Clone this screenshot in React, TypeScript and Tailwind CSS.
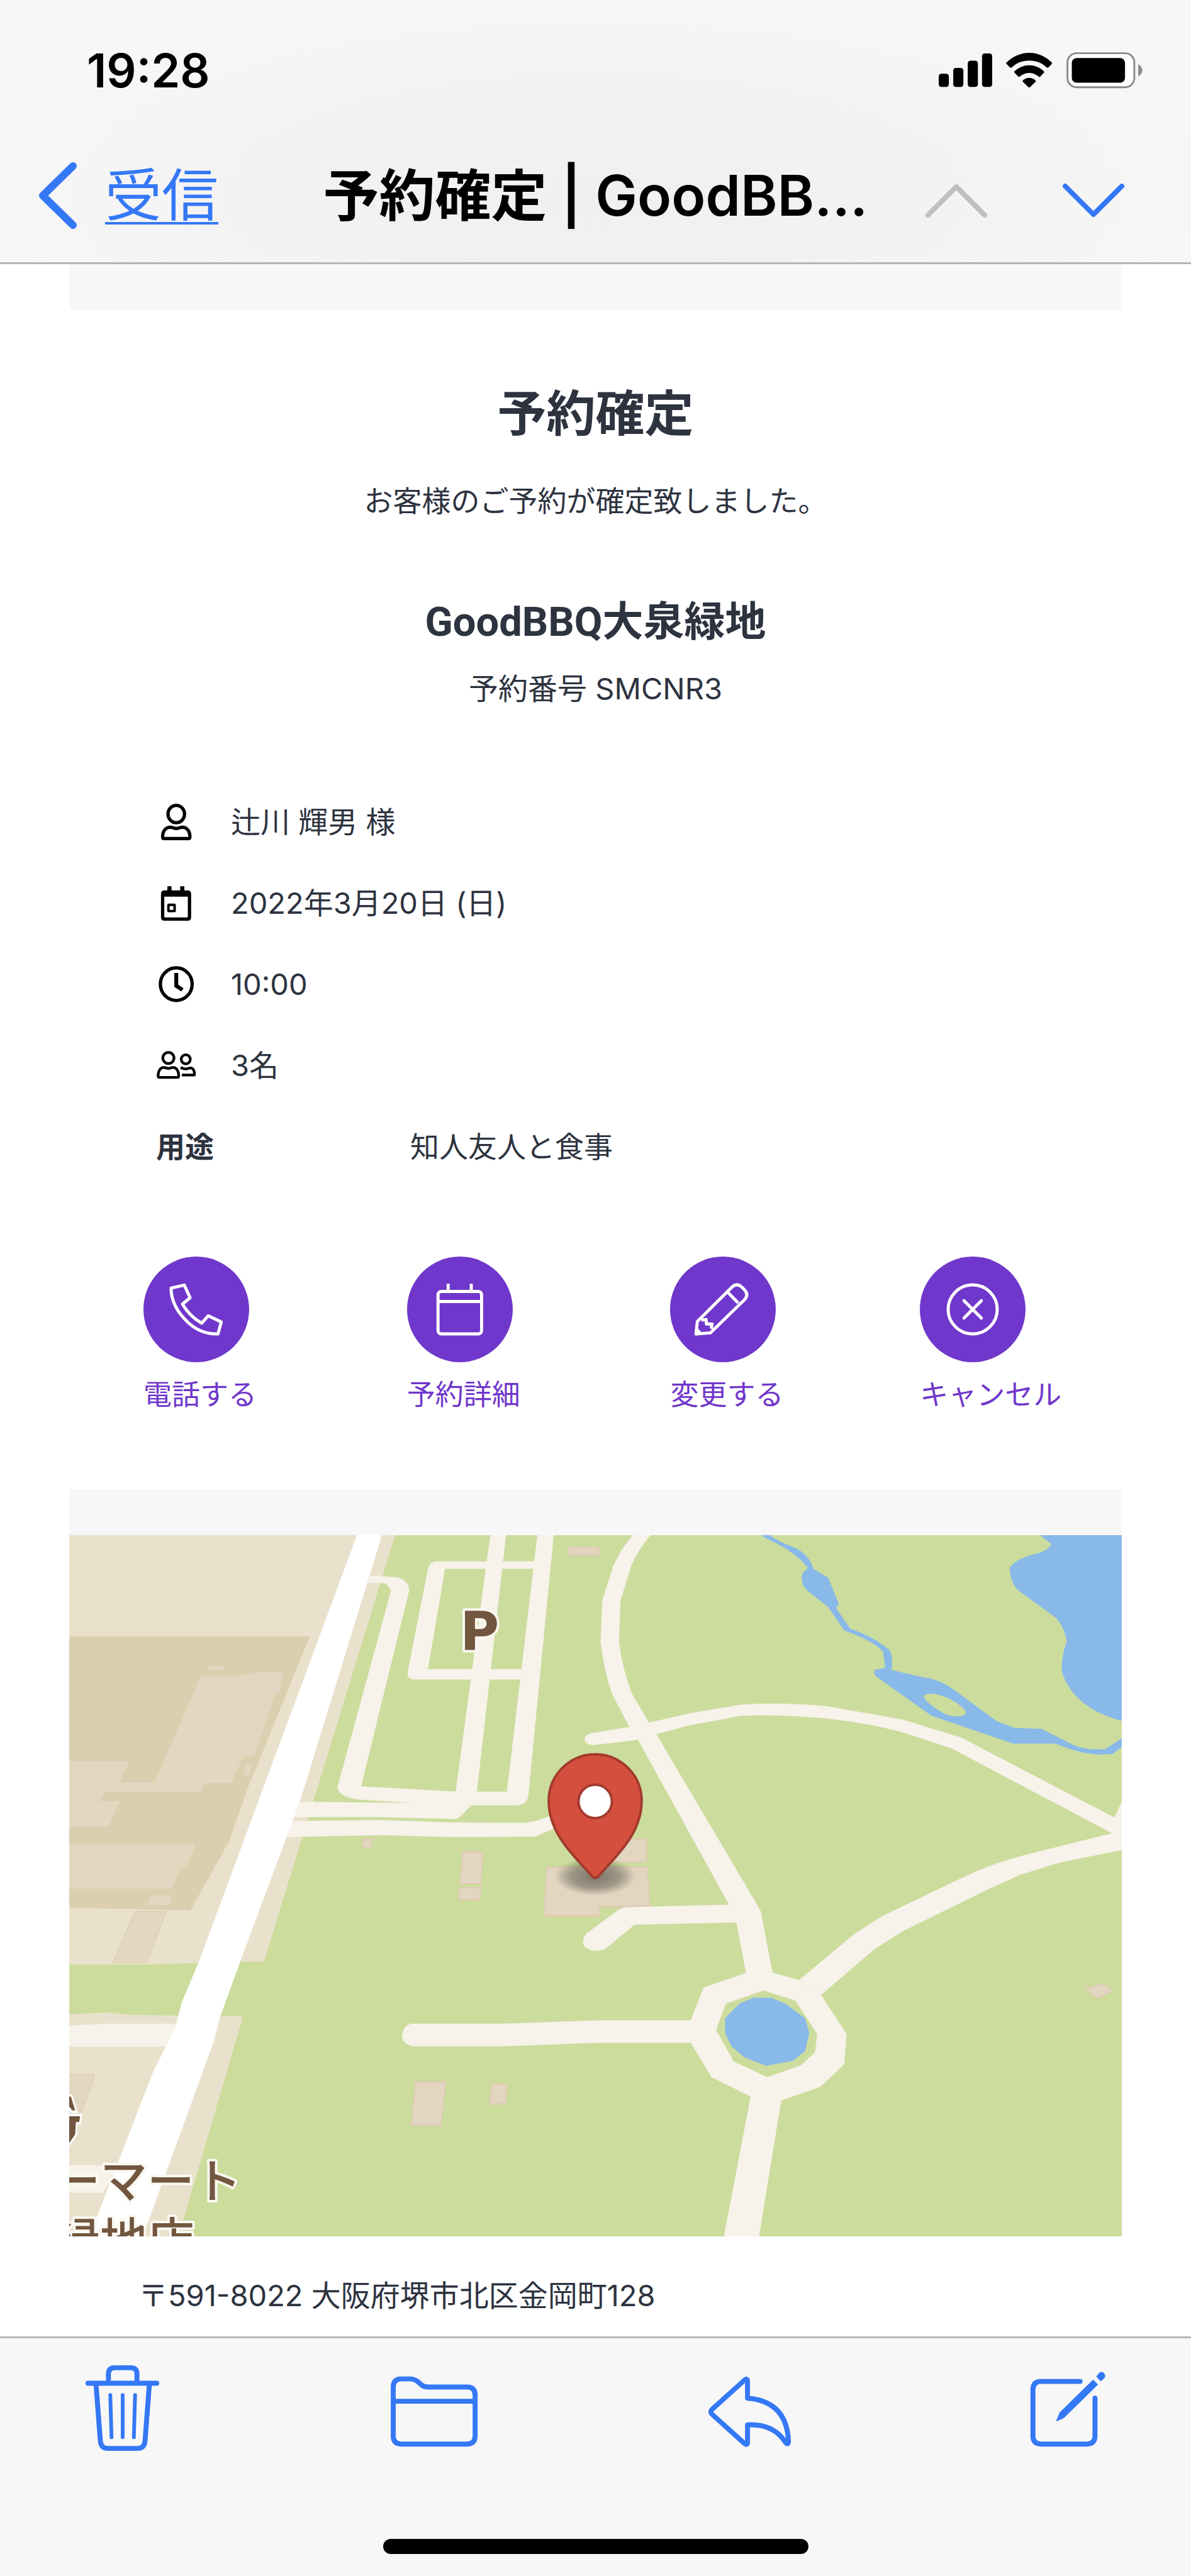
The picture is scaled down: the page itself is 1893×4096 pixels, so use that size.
import type { ReactNode } from 'react';

const StatusBar = () => (
  <div className="flex h-[224px] items-center justify-between pl-[138px] pr-[77px]">
    <time className="text-[74px] font-semibold leading-none text-black">19:28</time>
    <div className="flex items-center gap-[22px]">
      <svg viewBox="0 0 258 162" className="w-[85px]" aria-label="電波">
        <rect x="0" y="98" width="49" height="64" rx="13" />
        <rect x="70" y="70" width="49" height="92" rx="13" />
        <rect x="140" y="35" width="49" height="127" rx="13" />
        <rect x="209" y="0" width="49" height="162" rx="13" />
      </svg>
      <svg viewBox="428 76 224 168" className="w-[74px]" aria-label="Wi-Fi">
        <path d="M429 124Q475 77 540 76Q604 77 649 124Q650 128 646 132L631 147Q628 149 624 146Q590 113 540 113Q489 113 455 146Q451 149 448 147L432 131Q427 127 429 124Z" />
        <path d="M468 165Q500 136 540 136Q579 136 611 165Q613 168 610 172L592 191Q588 193 585 190Q564 173 540 173Q515 173 494 190Q491 193 488 191L469 172Q466 168 468 165Z" />
        <path d="M508 210Q521 196 540 196Q558 196 571 210Q573 213 570 215L543 242Q539 245 536 242L509 215Q507 213 508 210Z" />
      </svg>
      <svg viewBox="717 74 369 175" className="w-[121px]" aria-label="バッテリー">
        <rect x="722" y="79" width="324" height="165" rx="44" fill="#fff" stroke="#8b8b8b" strokeWidth="9" />
        <rect x="743" y="102" width="258" height="120" rx="24" />
        <path d="M1065 132Q1085 144 1085 162Q1085 180 1065 192Z" fill="#8b8b8b" />
      </svg>
    </div>
  </div>
);

const NavBar = () => (
  <nav className="grid h-[174px] grid-cols-[1fr_auto_1fr] items-center">
    <a href="#inbox" className="flex items-center gap-[44px] pl-[60px] text-[#3478f6]">
      <svg viewBox="0 0 63 108" className="w-[63px]" fill="none" stroke="currentColor" strokeWidth="12" strokeLinecap="round" strokeLinejoin="round">
        <path d="M56 7L8 54L56 101" />
      </svg>
      <span className="text-[90px] leading-[110px] underline decoration-[4px] underline-offset-[10px]">受信</span>
    </a>
    <h1 className="text-[89px] font-semibold leading-[110px] text-black">予約確定 | GoodBB...</h1>
    <div className="flex items-center justify-end gap-[118px] pt-4 pr-[105px]">
      <button type="button" aria-label="前のメール" className="text-[#bfbfbf]">
        <svg viewBox="0 0 100 56" className="w-[100px]" fill="none" stroke="currentColor" strokeWidth="8" strokeLinecap="round" strokeLinejoin="round">
          <path d="M5 51L50 6L95 51" />
        </svg>
      </button>
      <button type="button" aria-label="次のメール" className="text-[#3478f6]">
        <svg viewBox="0 0 100 56" className="w-[100px]" fill="none" stroke="currentColor" strokeWidth="8" strokeLinecap="round" strokeLinejoin="round">
          <path d="M5 5L50 50L95 5" />
        </svg>
      </button>
    </div>
  </nav>
);

type Detail = { label: string; value: string; icon: ReactNode };

const details: Detail[] = [
  {
    label: 'お名前',
    value: '辻川 輝男 様',
    icon: (
      <svg viewBox="60 66 195 195" className="size-16" fill="none" stroke="#000" strokeWidth="16" strokeLinejoin="round">
        <ellipse cx="158" cy="125" rx="40" ry="42" />
        <path d="M99 244Q92 244 92 234C92 208 107 189 128 189C143 189 146 195 158 195C170 195 173 189 188 189C209 189 224 208 224 234Q224 244 217 244Z" />
      </svg>
    ),
  },
  {
    label: '日付',
    value: '2022年3月20日 (日)',
    icon: (
      <svg viewBox="47 68 195 195" className="size-16">
        <path fillRule="evenodd" d="M102 84H122V104H164V84H184V104H200Q217 104 217 121V234Q217 251 200 251H88Q71 251 71 234V121Q71 104 88 104H102ZM87 134V230Q87 235 92 235H196Q201 235 201 230V134Z" />
        <rect x="107" y="174" width="30" height="30" rx="2" fill="none" stroke="#000" strokeWidth="12" />
      </svg>
    ),
  },
  {
    label: '時間',
    value: '10:00',
    icon: (
      <svg viewBox="48 463 195 195" className="size-16" fill="none" stroke="#000">
        <ellipse cx="146" cy="560" rx="77" ry="79" strokeWidth="16" />
        <path d="M146 506V568L176 588" strokeWidth="19" />
      </svg>
    ),
  },
  {
    label: '人数',
    value: '3名',
    icon: (
      <svg viewBox="48 855 195 195" className="size-16" fill="none" stroke="#000" strokeWidth="13" strokeLinejoin="round">
        <circle cx="108" cy="917" r="27" />
        <path d="M64 1011Q58 1011 58 1003C58 981 68 963 84 963C96 963 98 967 108 967C118 967 120 963 132 963C148 963 158 981 158 1003Q158 1011 152 1011Z" />
        <circle cx="192" cy="923" r="22" />
        <path d="M167 963Q174 966 181 968Q192 972 202 968Q235 956 234 999H173" />
      </svg>
    ),
  },
];

const actions: { label: string; icon: ReactNode }[] = [
  {
    label: '電話する',
    icon: (
      <path d="M106 125L170 110L198 172L161 202Q194 260 254 295L286 259L349 289L333 347Q240 350 171 274Q106 205 106 125Z" />
    ),
  },
  {
    label: '予約詳細',
    icon: (
      <>
        <rect x="122" y="141" width="211" height="206" rx="16" />
        <path d="M122 190H333M171 104V141M283 104V141" />
      </>
    ),
  },
  {
    label: '変更する',
    icon: (
      <>
        <path d="M98 347L104 287L272 120Q296 98 319 120L332 133Q355 156 333 181L167 342Z" />
        <path d="M252 146L302 197M124 280L147 277L148 299L176 299L171 322" />
        <path d="M98 347L101 324L119 345Z" fill="#fff" />
      </>
    ),
  },
  {
    label: 'キャンセル',
    icon: (
      <>
        <circle cx="228" cy="228" r="119" />
        <path d="M186 186L270 270M270 186L186 270" strokeWidth="15" strokeLinecap="round" />
      </>
    ),
  },
];

const Reservation = () => (
  <section className="pt-[115px] pb-[118px] text-[46px] leading-[64px] text-[#2d333f]">
    <div className="text-center">
      <h2 className="text-[78px] font-bold leading-[100px]">予約確定</h2>
      <p className="mt-14">お客様のご予約が確定致しました。</p>
      <h3 className="mt-[121px] font-['Roboto','Noto_Sans_CJK_JP',sans-serif] text-[65px] font-bold leading-[80px]">GoodBBQ大泉緑地</h3>
      <p className="mt-[34px] text-[47px]">予約番号 SMCNR3</p>
    </div>

    <dl className="mt-[115px] pl-[138px]">
      {details.map((d) => (
        <div key={d.label} className="flex h-[129px] items-center">
          <dt className="w-[119px]" aria-label={d.label}>{d.icon}</dt>
          <dd className="text-[47px]">{d.value}</dd>
        </div>
      ))}
      <div className="flex h-[129px] items-center">
        <dt className="w-[404px] font-bold">用途</dt>
        <dd>知人友人と食事</dd>
      </div>
    </dl>

    <div className="mt-[111px] grid grid-cols-[419fr_419fr_397fr_321fr] pl-[118px]">
      {actions.map((a) => (
        <a key={a.label} href="#action" className="flex flex-col items-start gap-5 text-[45px] text-[#6f37cb]">
          <svg viewBox="-28 -28 512 512" className="size-[168px] rounded-full bg-[#6f37cb]" fill="none" stroke="#fff" strokeWidth="15" strokeLinejoin="round">
            {a.icon}
          </svg>
          {a.label}
        </a>
      ))}
    </div>
  </section>
);

const ParkMap = () => (
  <svg viewBox="0 0 1699 1132" className="block w-full bg-[#ccdc9d]" role="img" aria-label="大泉緑地の地図">
    <defs>
      <radialGradient id="pin-shadow">
        <stop offset="0" stopColor="#000" stopOpacity="0.45" />
        <stop offset="0.6" stopColor="#000" stopOpacity="0.3" />
        <stop offset="1" stopColor="#000" stopOpacity="0" />
      </radialGradient>
    </defs>

    {/* west side: town blocks, main road and car park */}
    <g transform="matrix(.574 0 0 .7908 -11 -96)">
      <path fill="#e9e1cc" d="M15 118H937L567 992H500L250 998H15Z" />
      <path fill="#dccfb0" d="M15 328H696L520 640L470 745L360 888L15 882Z" />
      <g fill="#e2d8c1">
        <path d="M390 408H500L560 401H620L612 442H600L540 572L508 574L475 627H258Z" />
        <path d="M15 583H188L160 626H400L390 645H118L104 665H160L130 716H15Z" />
        <path d="M15 751H375L352 796L334 800L308 843H15Z" />
        <path d="M250 858H308L300 877H236ZM415 389H458L450 397H410ZM515 588H535L527 612H509Z" />
      </g>
      <path fill="#e2d8c1" stroke="#dccdb0" strokeWidth="2" d="M203 890H292L238 994H143Z" />
      <path fill="#e9e1cc" d="M15 1100L130 1096L190 1101L508 1104L325 1556H15Z" />
      <path fill="#e2d8c1" stroke="#dccdb0" strokeWidth="2" d="M10 1223H92L55 1300L10 1290Z" />
      <g fill="#f7f2ea">
        <path d="M15 1123L120 1119H325L290 1166H15ZM15 1408H160L115 1464H15Z" />
        <path d="M865 204L900 205L945 208Q980 218 974 238L840 634L1108 645H1250L1336 118H1382L1310 655Q1304 672 1280 673H1150L1125 692Q1112 702 1100 701L880 697H645L668 666L985 668L830 661Q768 654 775 632L924 235Q915 220 900 219H857Z" />
        <path d="M1204 118H1248L1165 650H1105Z" />
        <path d="M1050 175H1335V190H1076L1028 395H1292L1288 416H985Q968 412 971 400L1028 190Q1034 176 1050 175Z" />
        <path d="M640 705L900 703L1100 708L1300 709L1330 705L1400 688V715L1330 737L1100 738L900 734L625 738Z" />
        <path d="M985 1119H1240L1500 1112H1775V1158H1500L1240 1165H985Q955 1160 955 1142Q960 1120 985 1119Z" />
      </g>
      <path fill="#fff" d="M830 118H900L668 665L500 992L444 1104L426 1155L225 1556H75L88 1530L255 1218L318 1125L336 1075L385 990Z" />
      <g fill="#e2d6c0" stroke="#decbb2" strokeWidth="3">
        <path d="M848 742H872L869 759H843ZM1126 768H1183L1177 833H1117ZM1117 841H1177L1173 866H1113Z" />
        <path d="M993 1238H1078L1065 1327H981ZM1208 1242H1251L1246 1283H1201ZM1423 147H1510V162H1423Z" />
        <path d="M1530 742H1643V789H1530ZM1362 800H1645L1652 878L1580 880H1510V899H1354Z" />
      </g>
      <path fill="#72563f" stroke="#fff" strokeWidth="10" paintOrder="stroke" d="M10 1268L24 1268L36 1296H28L10 1280ZM10 1308H50L47 1320H38L36 1345L20 1362L10 1360Z" />
    </g>

    {/* east side: paths, stream, lake and fountain */}
    <g transform="matrix(.574 0 0 .7908 829 -96)">
      <g fill="#f7f2ea">
        <path d="M145 118Q110 145 85 185L55 255L50 340Q60 400 82 445L130 512L152 535L412 877L432 912L460 1020H535L500 888L207 528L187 505L138 445Q110 390 102 340L106 255L137 182Q160 145 195 118Z" />
        <path d="M30 525L130 513L187 504L300 485L440 468Q540 461 690 471L900 498L1065 535L1495 698L1518 662V764L1340 790L1230 815L1130 848L900 930L820 967L670 1060L608 1030L765 935L840 900L1075 818Q1150 792 1240 775L1488 730L1035 556L895 523Q800 505 690 496Q540 486 440 491L300 510L207 528L150 540L30 550Q5 548 5 537Q8 527 30 525Z" />
        <path d="M415 876L120 881Q104 883 90 892L10 935Q-5 950 5 962Q30 975 62 967L145 917L435 912Z" />
        <path d="M340 1045L460 1015H535L608 1030L670 1060L742 1140L735 1202L668 1248L558 1276L495 1556H396L472 1268L362 1228L303 1157V1112Z" />
      </g>
      <path fill="#ccdc9d" d="M402 1078L508 1051L598 1072L659 1140L653 1177L613 1204L518 1228L424 1196L375 1132Z" />
      <g fill="#88b9e8">
        <path d="M400 1108L440 1078L480 1066H530L570 1078L625 1108L637 1138L625 1175L590 1195L515 1205L455 1188L418 1165L400 1138Z" />
        <path d="M496 118L515 128Q590 150 633 188L617 200Q610 225 640 240L690 268L735 316Q820 338 845 360L850 392L820 397Q815 407 835 415L980 490L1210 547H1330Q1420 575 1490 568L1518 553V535L1470 558Q1420 562 1380 550L1290 517L1215 515L1165 502L1040 435Q1000 415 960 412L868 397Q875 360 855 352Q820 330 752 312L712 270L720 262L690 208L648 190Q640 165 600 148Q540 132 520 118Z" />
        <path d="M1280 118L1318 140Q1305 155 1270 160Q1210 172 1200 190Q1205 225 1230 237L1330 290Q1355 310 1361 338Q1345 370 1347 400Q1380 475 1518 501V118Z" />
      </g>
      <path fill="#ccdc9d" d="M958 450Q975 438 1030 455Q1080 475 1077 485Q1065 497 1020 487Q965 465 958 450Z" />
      <path fill="#e2d6c0" stroke="#decbb2" strokeWidth="2" d="M1413 1048L1460 1037L1493 1052L1445 1067Z" />
    </g>

    <g fill="#72563f" stroke="#fbf8f2" strokeWidth="8" strokeLinejoin="round" paintOrder="stroke">
      <text x="631" y="186" className="font-['DejaVu_Sans',sans-serif] text-[86px] font-bold">P</text>
      <g className="font-['Noto_Sans_CJK_JP',sans-serif] text-[76px] font-medium">
        <text x="-26" y="1070">ーマート</text>
        <text x="-26" y="1166">緑地店</text>
      </g>
    </g>

    <ellipse cx="849" cy="551" rx="66" ry="31" fill="url(#pin-shadow)" />
    <path
      d="M844 551C820 522 774 485 774 429A75 75 0 0 1 924 429C924 485 878 522 854 551Q849 556 844 551Z"
      fill="#d54f3e"
      stroke="#a23a2e"
      strokeWidth="4"
    />
    <circle cx="849" cy="430" r="27" fill="#fff" stroke="#a23a2e" strokeWidth="4" />
  </svg>
);

const tools: { label: string; viewBox: string; icon: ReactNode }[] = [
  {
    label: 'ゴミ箱',
    viewBox: '127 3812 142 142',
    icon: (
      <>
        <path d="M142 3843H253M175 3842V3828Q175 3818 185 3818H211Q221 3818 221 3828V3842" />
        <path d="M155 3845L162 3936Q163 3948 174 3948H222Q233 3948 234 3936L241 3845" />
        <path d="M178 3862L180 3930M198 3862V3930M218 3862L216 3930" strokeWidth="6" />
      </>
    ),
  },
  {
    label: 'フォルダ',
    viewBox: '634 3812 142 142',
    icon: (
      <path d="M633 3928V3849Q633 3836 646 3836H660Q667 3836 672 3840L679 3846Q683 3849 689 3849H752Q765 3849 765 3862V3928Q765 3941 752 3941H646Q633 3941 633 3928ZM633 3872H765" />
    ),
  },
  {
    label: '返信',
    viewBox: '1141 3812 142 142',
    icon: (
      <path d="M1198 3838L1147 3884Q1141 3889 1147 3894L1198 3940Q1203 3944 1203 3938V3910Q1245 3908 1264 3938Q1269 3944 1269 3936Q1266 3872 1203 3867V3840Q1203 3834 1198 3838Z" />
    ),
  },
  {
    label: '新規作成',
    viewBox: '1648 3812 142 142',
    icon: (
      <>
        <path d="M1738 3840H1675Q1662 3840 1662 3853V3928Q1662 3941 1675 3941H1749Q1762 3941 1762 3928V3867" />
        <path d="M1759 3837L1767 3845L1712 3899L1701 3904Q1699 3904 1700 3902L1705 3890ZM1764 3832L1769 3826Q1773 3823 1777 3827Q1780 3831 1777 3835L1771 3840Z" fill="currentColor" stroke="none" />
      </>
    ),
  },
];

const Toolbar = () => (
  <footer className="border-t-3 border-[#b5b5b5] bg-[#f7f7f7] pt-[41px] pb-[35px]">
    <div className="flex justify-between px-[125px]">
      {tools.map((t) => (
        <button key={t.label} type="button" aria-label={t.label} className="text-[#3478f6]">
          <svg viewBox={t.viewBox} className="size-[140px] overflow-visible" fill="none" stroke="currentColor" strokeWidth="8" strokeLinecap="round" strokeLinejoin="round">
            {t.icon}
          </svg>
        </button>
      ))}
    </div>
    <div className="mx-auto mt-[138px] h-6 w-[676px] rounded-full bg-black" />
  </footer>
);

export default function App() {
  return (
    <div className="bg-white font-['Inter','Noto_Sans_CJK_JP',sans-serif]" lang="ja">
      <header className="border-b-3 border-[#b5b5b5] bg-[radial-gradient(ellipse_at_50%_75%,#f0f0f0_0%,#f3f3f3_45%,#f7f7f7_75%)] pb-[19px]">
        <StatusBar />
        <NavBar />
      </header>
      <main className="px-[110px] pb-[33px]">
        <div className="h-[73px] bg-[#f7f7f7]" />
        <Reservation />
        <div className="h-[73px] bg-[#f7f7f7]" />
        <ParkMap />
        <address className="mt-[62px] pl-[110px] text-[47px] not-italic leading-[64px] text-[#2d333f]">
          〒591-8022 大阪府堺市北区金岡町128
        </address>
      </main>
      <Toolbar />
    </div>
  );
}
